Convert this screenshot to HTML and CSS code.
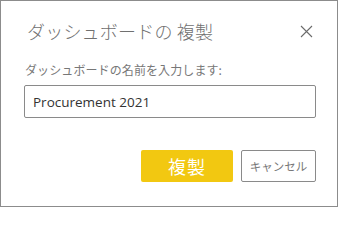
FILE: index.html
```html
<!DOCTYPE html>
<html lang="ja">
<head>
<meta charset="utf-8">
<link rel="stylesheet" href="styles.css">
</head>
<body>
<div class="dialog">
  <div class="header">
    <h1 class="title">ダッシュボードの 複製</h1>
    <button class="close" aria-label="閉じる">
      <svg width="13" height="13" viewBox="0 0 13 13"><path d="M1 1L12 12M12 1L1 12" stroke="#6b6b6b" stroke-width="1.1" fill="none"/></svg>
    </button>
  </div>
  <label class="label" for="name">ダッシュボードの名前を入力します:</label>
  <input id="name" class="input" type="text" value="Procurement 2021">
  <div class="actions">
    <button class="btn primary">複製</button>
    <button class="btn secondary">キャンセル</button>
  </div>
</div>
</body>
</html>
```
FILE: styles.css
```css
html, body {
  margin: 0;
  padding: 0;
  background: #fff;
}
body {
  width: 339px;
  height: 207px;
  font-family: "Noto Sans CJK JP", "Noto Sans", sans-serif;
}
.dialog {
  box-sizing: border-box;
  width: 338px;
  height: 207px;
  border: 1px solid #8c8c8c;
  padding: 16px 22px 0 23px;
  display: flex;
  flex-direction: column;
}
.header {
  display: flex;
  align-items: center;
  justify-content: space-between;
  height: 28px;
}
.title {
  margin: 0 0 0 3px;
  font-size: 18px;
  font-weight: 300;
  color: #707070;
  letter-spacing: 0.2px;
  line-height: 28px;
}
.close {
  border: 0;
  background: none;
  padding: 0;
  width: 13px;
  height: 13px;
  margin-right: 2px;
  display: flex;
}
.label {
  margin-top: 17px;
  margin-left: 1px;
  font-size: 12px;
  color: #777;
  line-height: 16px;
  letter-spacing: 0.1px;
}
.input {
  box-sizing: border-box;
  margin-top: 7px;
  width: 292px;
  height: 33px;
  border: 1px solid #8a8a8a;
  border-radius: 2px;
  padding: 0 8px;
  font-family: "Open Sans", "Noto Sans", sans-serif;
  font-size: 13.5px;
  color: #333;
  outline: none;
}
.actions {
  display: flex;
  justify-content: flex-end;
  gap: 8px;
  margin-top: 32px;
  width: 292px;
}
.btn {
  box-sizing: border-box;
  height: 32px;
  border-radius: 2px;
  font-family: "Noto Sans CJK JP", sans-serif;
  padding: 0;
}
.primary {
  width: 92px;
  background: #f2c811;
  border: 0;
  color: #fff;
  font-size: 18px;
  letter-spacing: 1px;
}
.secondary {
  width: 75px;
  background: #fff;
  border: 1px solid #8a8a8a;
  color: #777;
  font-size: 11.5px;
}
```
